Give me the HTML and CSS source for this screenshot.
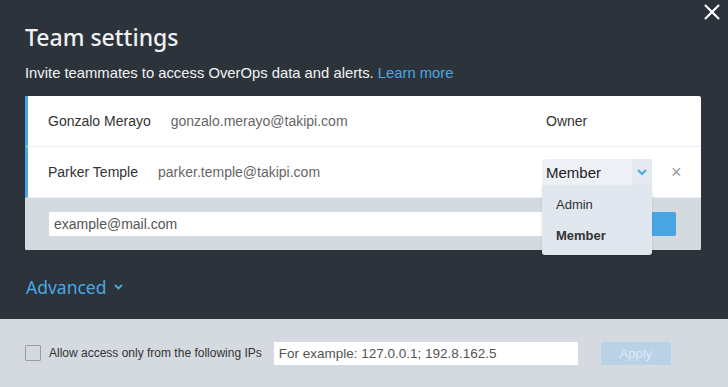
FILE: index.html
```html
<!DOCTYPE html>
<html lang="en">
<head>
    <meta charset="UTF-8">
    <meta name="viewport" content="width=device-width, initial-scale=1.0">
    <title>Team settings</title>
    <link rel="stylesheet" href="styles.css">
</head>
<body>
    <div class="modal">
        <button class="close-btn" aria-label="Close">
            <svg width="16" height="16" viewBox="0 0 16 16"><path d="M1 1 L15 15 M15 1 L1 15" stroke="#fff" stroke-width="2.2" fill="none"/></svg>
        </button>

        <div class="modal-body">
            <h1>Team settings</h1>
            <p class="subtitle">Invite teammates to access OverOps data and alerts. <a href="#">Learn more</a></p>

            <div class="team-list">
                <div class="member-row">
                    <span class="member-name">Gonzalo Merayo</span>
                    <span class="member-email">gonzalo.merayo@takipi.com</span>
                    <div class="member-role">
                        <span class="role-text">Owner</span>
                    </div>
                </div>
                <div class="member-row">
                    <span class="member-name">Parker Temple</span>
                    <span class="member-email">parker.temple@takipi.com</span>
                    <div class="member-role">
                        <div class="role-select">
                            <span class="select-value">Member</span>
                            <span class="select-arrow">
                                <svg width="10" height="7" viewBox="0 0 10 7"><path d="M1 1 L5 5 L9 1" stroke="#4aa8e2" stroke-width="2" fill="none"/></svg>
                            </span>
                            <div class="select-menu">
                                <div class="select-option">Admin</div>
                                <div class="select-option selected">Member</div>
                            </div>
                        </div>
                        <span class="remove-btn">&times;</span>
                    </div>
                </div>
                <div class="invite-row">
                    <input type="text" class="invite-input" placeholder="example@mail.com">
                    <button class="invite-btn" aria-label="Invite"></button>
                </div>
            </div>

            <div class="advanced-toggle">
                Advanced
                <svg width="9" height="6" viewBox="0 0 9 6"><path d="M1 1 L4.5 4.5 L8 1" stroke="#4aa8e0" stroke-width="1.8" fill="none"/></svg>
            </div>
        </div>

        <div class="advanced-panel">
            <label class="ip-check">
                <span class="checkbox"></span>
                Allow access only from the following IPs
            </label>
            <input type="text" class="ip-input" placeholder="For example: 127.0.0.1; 192.8.162.5">
            <button class="apply-btn">Apply</button>
        </div>
    </div>
</body>
</html>
```

FILE: styles.css
```css
body {
    margin: 0;
    background: #2d333b;
    font-family: 'Liberation Sans', Arial, sans-serif;
    width: 728px;
    height: 387px;
    overflow: hidden;
}
.modal {
    position: relative;
    height: 387px;
    display: flex;
    flex-direction: column;
}
.close-btn {
    position: absolute;
    top: 4px;
    right: 8px;
    background: none;
    border: none;
    padding: 0;
    cursor: pointer;
}
.modal-body {
    padding: 21px 27px 0 25px;
    flex: 1;
}
h1 {
    font-family: 'Noto Sans', sans-serif;
    font-weight: 500;
    font-size: 23px;
    line-height: 32px;
    color: #eef0f2;
    margin: 0;
}
.subtitle {
    margin: 10px 0 0;
    font-size: 14.8px;
    line-height: 20px;
    color: #f2f3f5;
}
.subtitle a {
    color: #4aa8e2;
    text-decoration: none;
}
.team-list {
    margin-top: 13px;
    background: #fff;
    border-radius: 2px;
}
.member-row {
    height: 50px;
    display: flex;
    align-items: center;
    gap: 20px;
    padding-left: 20px;
    border-left: 3px solid #4aa8e2;
    border-bottom: 1px solid #eceef1;
    font-size: 14px;
    color: #333;
}
.member-email {
    color: #666;
}
.member-role {
    margin-left: auto;
    width: 159px;
    display: flex;
    align-items: center;
}
.role-text {
    padding-left: 4px;
    color: #333;
}
.role-select {
    position: relative;
    width: 110px;
    height: 26px;
    display: flex;
    align-items: center;
    background: #edf1f5;
    border-radius: 3px 3px 0 0;
    font-size: 15px;
    color: #222;
}
.select-value {
    flex: 1;
    padding-left: 4px;
}
.select-arrow {
    width: 20px;
    height: 26px;
    display: flex;
    align-items: center;
    justify-content: center;
    background: #e4eaef;
}
.select-menu {
    position: absolute;
    top: 26px;
    left: 0;
    width: 110px;
    height: 70px;
    background: #e1e7ee;
    border-radius: 0 0 3px 3px;
    box-shadow: 0 1px 2px rgba(0,0,0,0.15);
    z-index: 2;
    padding-top: 8px;
    box-sizing: border-box;
}
.select-option {
    height: 31px;
    line-height: 24px;
    padding-left: 14px;
    font-size: 13px;
    color: #333;
}
.select-option.selected {
    font-weight: bold;
}
.remove-btn {
    margin-left: 19px;
    color: #999;
    font-size: 18px;
    line-height: 18px;
}
.invite-row {
    height: 52px;
    background: #d5dae1;
    display: flex;
    align-items: center;
    gap: 6px;
    padding: 0 25px 0 24px;
    border-radius: 0 0 2px 2px;
}
.invite-input {
    flex: 1;
    height: 24px;
    border: none;
    padding: 0 5px;
    font-family: 'Liberation Sans', Arial, sans-serif;
    font-size: 14px;
    box-sizing: border-box;
}
.invite-input::placeholder {
    color: #555;
}
.invite-btn {
    width: 70px;
    height: 24px;
    background: #49a6e3;
    border: none;
    border-radius: 2px;
}
.advanced-toggle {
    margin-top: 25px;
    margin-left: 1px;
    font-family: 'Noto Sans', sans-serif;
    font-size: 17.5px;
    color: #4aa8e0;
    display: flex;
    align-items: center;
    gap: 7px;
}
.advanced-panel {
    height: 68px;
    background: #d5d9e0;
    display: flex;
    align-items: center;
    padding-left: 25px;
}
.ip-check {
    display: flex;
    align-items: center;
    gap: 8px;
    font-size: 12px;
    color: #333;
}
.checkbox {
    width: 14px;
    height: 14px;
    border: 1px solid #9a9ea4;
    border-radius: 1px;
}
.ip-input {
    margin-left: 12px;
    width: 304px;
    height: 23px;
    border: none;
    padding: 0 5px;
    font-family: 'Liberation Sans', Arial, sans-serif;
    font-size: 13.5px;
    box-sizing: border-box;
}
.ip-input::placeholder {
    color: #555;
}
.apply-btn {
    margin-left: 23px;
    width: 70px;
    height: 23px;
    background: #b8d2e8;
    border: none;
    border-radius: 2px;
    color: #dde9f3;
    font-family: 'Liberation Sans', Arial, sans-serif;
    font-size: 13px;
}
```
